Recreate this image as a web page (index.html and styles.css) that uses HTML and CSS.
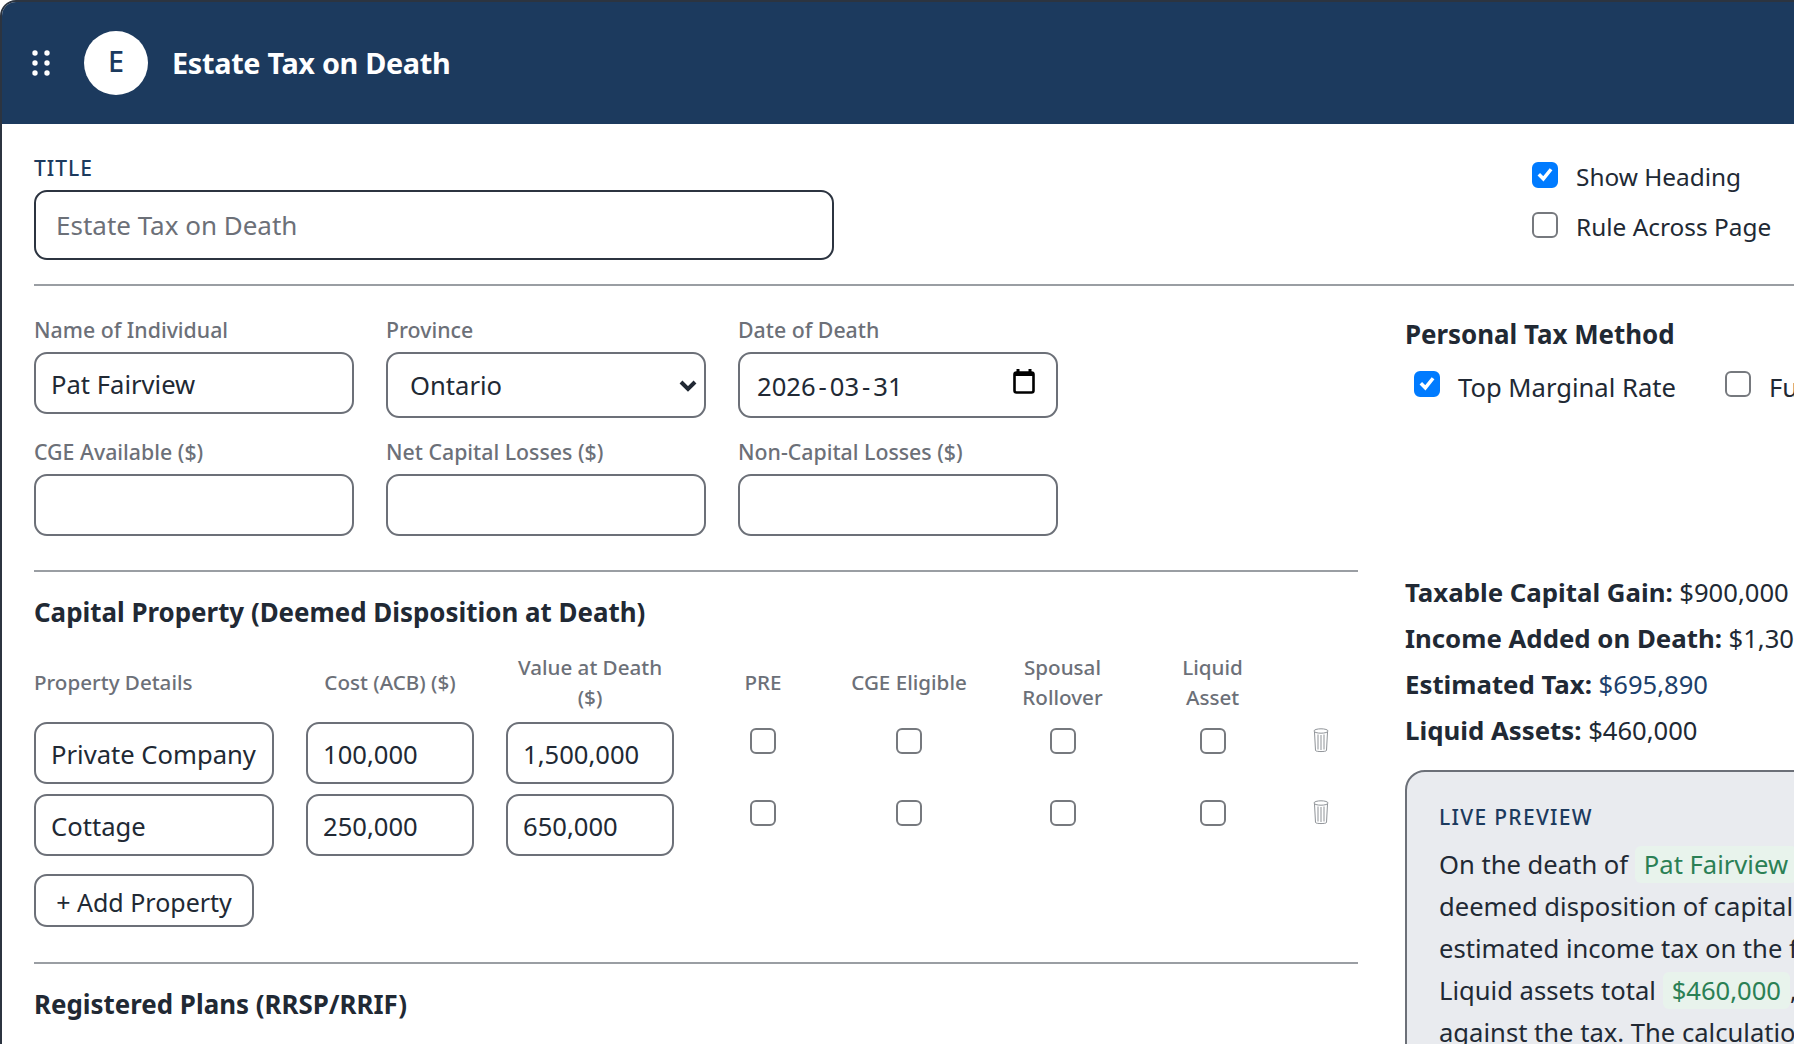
FILE: index.html
```html
<!DOCTYPE html>
<html lang="en">
<head>
<meta charset="utf-8">
<title>Estate Tax on Death</title>
<link rel="stylesheet" href="styles.css">
</head>
<body>
<div class="card">
  <header class="head">
    <svg class="grip" width="18" height="26" viewBox="0 0 18 26"><circle cx="3" cy="3" r="2.7"/><circle cx="15" cy="3" r="2.7"/><circle cx="3" cy="13" r="2.7"/><circle cx="15" cy="13" r="2.7"/><circle cx="3" cy="23" r="2.7"/><circle cx="15" cy="23" r="2.7"/></svg>
    <div class="avatar">E</div>
    <h1 class="head-title">Estate Tax on Death</h1>
  </header>
  <main class="body">
    <div class="top-row">
      <div class="title-block">
        <label class="caps-label">TITLE</label>
        <input class="field title-input" placeholder="Estate Tax on Death">
      </div>
      <div class="top-checks">
        <label class="check"><input type="checkbox" class="box" checked><span>Show Heading</span></label>
        <label class="check"><input type="checkbox" class="box"><span>Rule Across Page</span></label>
      </div>
    </div>
    <hr class="rule">
    <div class="columns">
      <section class="left">
        <div class="form-grid">
          <div class="item"><label class="lbl">Name of Individual</label><input class="field" value="Pat Fairview"></div>
          <div class="item"><label class="lbl">Province</label>
            <select class="field select"><option>Ontario</option></select></div>
          <div class="item"><label class="lbl">Date of Death</label>
            <div class="field date"><span class="date-text">2026<i>-</i>03<i>-</i>31</span>
              <svg width="22" height="25" viewBox="0 0 22 25"><path d="M5 0v4M17 0v4" stroke="#000" stroke-width="3" fill="none"/><rect x="1.500" y="3.500" width="19" height="20" rx="2" fill="none" stroke="#000" stroke-width="2.600"/><path d="M1.500 4h19v3h-19z" fill="#000"/></svg>
            </div></div>
          <div class="item"><label class="lbl">CGE Available ($)</label><input class="field"></div>
          <div class="item"><label class="lbl">Net Capital Losses ($)</label><input class="field"></div>
          <div class="item"><label class="lbl">Non-Capital Losses ($)</label><input class="field"></div>
        </div>
        <hr class="rule rule-a">
        <h2 class="sec">Capital Property (Deemed Disposition at Death)</h2>
        <div class="prop-grid">
          <div class="th th-left">Property Details</div>
          <div class="th">Cost (ACB) ($)</div>
          <div class="th">Value at Death<br>($)</div>
          <div class="th">PRE</div>
          <div class="th th-wide">CGE Eligible</div>
          <div class="th">Spousal<br>Rollover</div>
          <div class="th">Liquid<br>Asset</div>
          <div class="th"></div>

          <input class="field cell" value="Private Company">
          <input class="field cell" value="100,000">
          <input class="field cell" value="1,500,000">
          <div class="cc"><input type="checkbox" class="box"></div>
          <div class="cc"><input type="checkbox" class="box"></div>
          <div class="cc"><input type="checkbox" class="box"></div>
          <div class="cc"><input type="checkbox" class="box"></div>
          <div class="cc"><svg class="trash" width="16" height="25" viewBox="0 0 16 25"><ellipse cx="8" cy="3" rx="7" ry="2.200"/><path d="M1.500 4l1 18.500c.5 1.400 10.500 1.400 11 0l1-18.500M5 6.500v15M8 7v15M11 6.500v15"/></svg></div>

          <input class="field cell" value="Cottage">
          <input class="field cell" value="250,000">
          <input class="field cell" value="650,000">
          <div class="cc"><input type="checkbox" class="box"></div>
          <div class="cc"><input type="checkbox" class="box"></div>
          <div class="cc"><input type="checkbox" class="box"></div>
          <div class="cc"><input type="checkbox" class="box"></div>
          <div class="cc"><svg class="trash" width="16" height="25" viewBox="0 0 16 25"><ellipse cx="8" cy="3" rx="7" ry="2.200"/><path d="M1.500 4l1 18.500c.5 1.400 10.500 1.400 11 0l1-18.500M5 6.500v15M8 7v15M11 6.500v15"/></svg></div>
        </div>
        <button class="add" type="button">+ Add Property</button>
        <hr class="rule rule-b">
        <h2 class="sec sec-plans">Registered Plans (RRSP/RRIF)</h2>
      </section>
      <aside class="right">
        <h2 class="sec sec-tax">Personal Tax Method</h2>
        <div class="methods">
          <label class="check"><input type="checkbox" class="box" checked><span>Top Marginal Rate</span></label>
          <label class="check"><input type="checkbox" class="box"><span>Full Graduated Rates</span></label>
        </div>
        <div class="summary">
          <p><b>Taxable Capital Gain:</b> $900,000</p>
          <p><b>Income Added on Death:</b> $1,300,000</p>
          <p><b>Estimated Tax:</b> <span class="navy">$695,890</span></p>
          <p><b>Liquid Assets:</b> $460,000</p>
        </div>
        <div class="preview">
          <div class="caps-label caps-preview">LIVE PREVIEW</div>
          <p>On the death of <span class="tag">Pat Fairview</span>, the estate will report a</p>
          <p>deemed disposition of capital property and registered plans, with</p>
          <p>estimated income tax on the final return of $695,890.</p>
          <p>Liquid assets total <span class="tag">$460,000</span>, which may be applied</p>
          <p>against the tax. The calculation is an estimate only.</p>
        </div>
      </aside>
    </div>
  </main>
</div>
</body>
</html>
```
FILE: styles.css
```css
* { box-sizing: border-box; }
html, body { margin: 0; height: 100%; overflow: hidden; background: #fff; }
body { font-family: "Noto Sans", "Open Sans", sans-serif; color: #212934; font-size: 25.6px; }
.card { width: 2000px; height: 1100px; border: 2px solid #2c3440; border-bottom: 0; border-radius: 16px 0 0 0; overflow: hidden; background: #fff; }
.head { height: 122px; background: #1c3a5e; display: flex; align-items: center; padding-left: 30px; }
.grip { fill: #fff; flex: none; }
.avatar { width: 64px; height: 64px; margin-left: 34px; border-radius: 50%; background: #fff; color: #1c3a5e; font-size: 28.8px; font-weight: 500; display: flex; align-items: center; justify-content: center; padding-bottom: 5px; }
.head-title { margin: 0 0 2px 24px; color: #fff; font-size: 28.8px; font-weight: 700; letter-spacing: -.3px; }
.body { padding: 30px 0 0 32px; }
.top-row { display: flex; }
.title-block { width: 800px; flex: none; }
.caps-label { display: block; color: #1c3a5e; font-size: 21px; line-height: 28px; letter-spacing: 1px; font-weight: 500; }
.caps-preview { letter-spacing: 1.3px; margin-bottom: 13px; }
.field { display: block; width: 100%; height: 62px; border: 2px solid #6c7078; border-radius: 13px; background: #fff; font: inherit; color: #212934; padding: 3px 15px 0; margin: 0; outline: 0; }
.title-input { height: 70px; margin-top: 8px; border-color: #2c3440; padding: 0 20px; font-size: 26px; }
.title-input::placeholder { color: #6c7078; opacity: 1; }
.top-checks { margin-left: 698px; padding-top: 8px; display: flex; flex-direction: column; gap: 24px; font-size: 24.4px; }
.check { display: flex; align-items: center; gap: 18px; white-space: nowrap; line-height: 26px; }
.check span { position: relative; top: 2px; }
.box { appearance: none; -webkit-appearance: none; flex: none; display: block; width: 26px; height: 26px; margin: 0; border: 2px solid #76797e; border-radius: 6px; background: #fff; }
.box:checked { border-color: #007bff; background: #007bff url("data:image/svg+xml,%3Csvg xmlns='http://www.w3.org/2000/svg' viewBox='0 0 20 20'%3E%3Cpath fill='none' stroke='%23fff' stroke-linecap='square' stroke-width='3.200' d='m5.500 10.500 3 3 6-7.500'/%3E%3C/svg%3E") center/100% no-repeat; }
.rule { border: 0; height: 2px; background: #9a9ea3; margin: 24px 0 0; }
.columns { display: grid; grid-template-columns: 1324px 1fr; column-gap: 47px; }
.form-grid { display: grid; grid-template-columns: repeat(3, 320px); column-gap: 32px; row-gap: 20px; padding-top: 30px; align-items: start; }
.lbl { display: block; color: #6c7078; font-size: 21.300px; line-height: 28px; margin-bottom: 8px; font-weight: 500; }
.select { height: 66px; padding: 0 0 0 22px; appearance: none; -webkit-appearance: none; background: #fff url("data:image/svg+xml,%3Csvg xmlns='http://www.w3.org/2000/svg' viewBox='0 0 18 12'%3E%3Cpath fill='none' stroke='%23212934' stroke-width='4' d='M2 2l7 7 7-7'/%3E%3C/svg%3E") right 7px top 26px/18px 12px no-repeat; }
.date { height: 66px; display: flex; align-items: center; justify-content: space-between; padding: 2px 21px 0 17px; }
.date svg { margin-top: -10px; }
.date-text i { font-style: normal; padding: 0 3px; }
.rule-a { margin-top: 34px; }
.sec { font-size: 25.900px; font-weight: 700; margin: 0; }
.left > .sec { margin-top: 22px; line-height: 36px; }
.left > .sec-plans { margin-top: 22px; }
.prop-grid { display: grid; grid-template-columns: 240px 168px 168px 114px 114px 129px 107px 46px; column-gap: 32px; row-gap: 10px; margin-top: 22px; align-items: center; }
.th { color: #6c7078; font-size: 20.600px; line-height: 30px; text-align: center; font-weight: 500; white-space: nowrap; }
.th-left { text-align: left; }
.th-wide { margin: 0 -4px; }
.cell { margin: 0; }
.cc { align-self: start; display: flex; justify-content: center; padding-top: 6px; }
.trash { fill: none; stroke: #8f9398; stroke-width: 1; }
.add { display: block; margin-top: 18px; width: 220px; height: 53px; border: 2px solid #6c7078; border-radius: 13px; background: #fff; font: inherit; font-size: 25px; color: #212934; padding: 2px 0 0; }
.rule-b { margin-top: 35px; }
.right { padding-top: 30px; }
.sec-tax { line-height: 36px; }
.methods { display: flex; gap: 49px; margin-top: 19px; padding-left: 9px; }
.methods .check span { top: 4px; }
.summary { margin-top: 172px; }
.summary p { margin: 0; height: 46px; line-height: 46px; white-space: nowrap; }
.summary b { font-size: 25.800px; }
.navy { color: #1c3f6b; }
.preview { margin-top: 17px; width: 1000px; height: 400px; background: #e9ebef; border: 2px solid #6c7078; border-radius: 20px; padding: 31px 0 0 32px; }
.preview p { margin: 0; line-height: 42px; white-space: nowrap; }
.tag { background: #e8f3ec; color: #2b8055; border-radius: 6px; padding: 1px 9px; }
```
